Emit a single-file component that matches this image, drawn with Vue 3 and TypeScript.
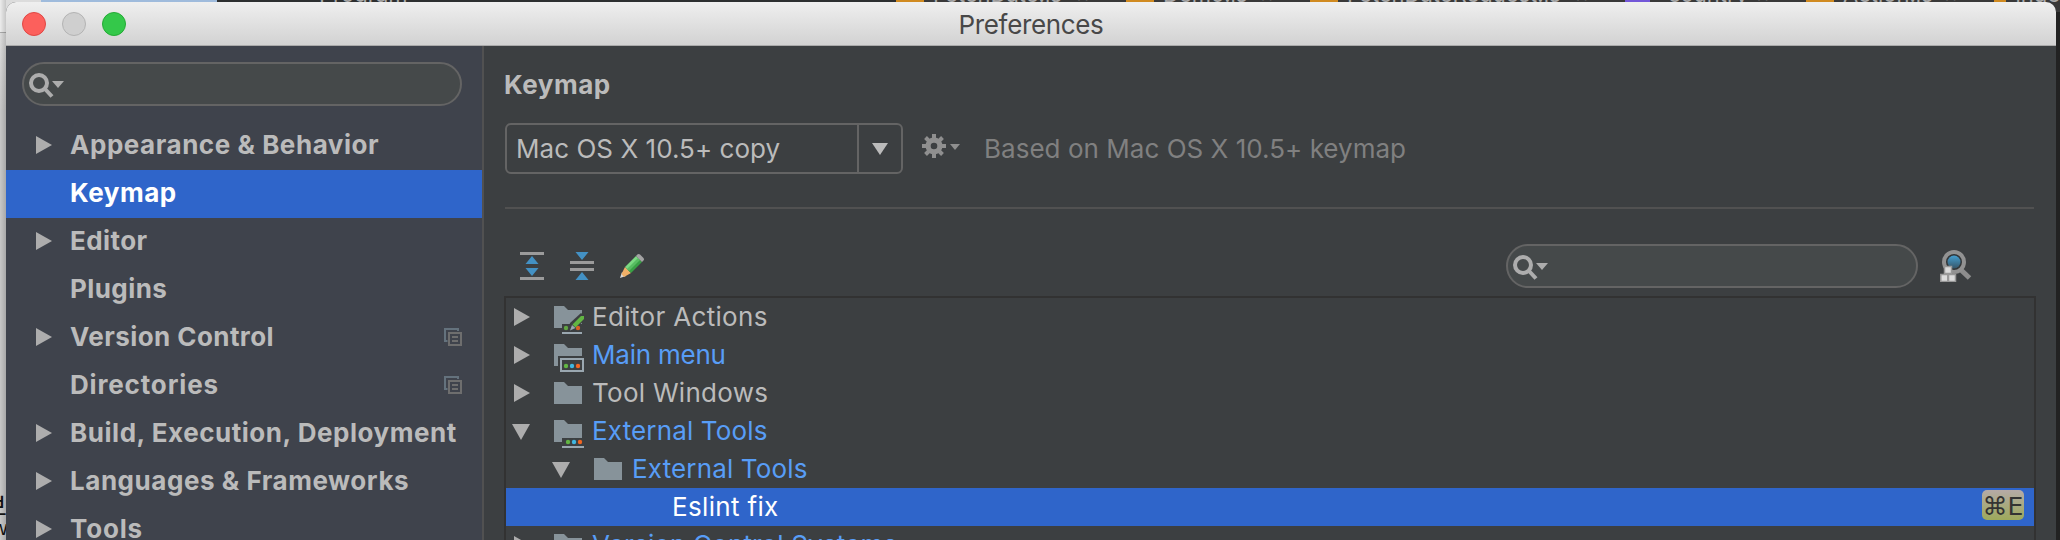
<script setup lang="ts">
interface SideItem { label: string; arrow: boolean; selected?: boolean; copy?: boolean; track: string }
interface TreeItem { label: string; level: number; arrow: 'right' | 'down' | ''; icon: string; link?: boolean; selected?: boolean; track: string }

const side: SideItem[] = [
  { label: 'Appearance & Behavior', arrow: true, track: 's0' },
  { label: 'Keymap', arrow: false, selected: true, track: 's1' },
  { label: 'Editor', arrow: true, track: 's2' },
  { label: 'Plugins', arrow: false, track: 's3' },
  { label: 'Version Control', arrow: true, copy: true, track: 's4' },
  { label: 'Directories', arrow: false, copy: true, track: 's5' },
  { label: 'Build, Execution, Deployment', arrow: true, track: 's6' },
  { label: 'Languages & Frameworks', arrow: true, track: 's7' },
  { label: 'Tools', arrow: true, track: 's8' },
]
const tree: TreeItem[] = [
  { label: 'Editor Actions', level: 0, arrow: 'right', icon: 'edit', track: 't0' },
  { label: 'Main menu', level: 0, arrow: 'right', icon: 'menu', link: true, track: 't1' },
  { label: 'Tool Windows', level: 0, arrow: 'right', icon: 'plain', track: 't2' },
  { label: 'External Tools', level: 0, arrow: 'down', icon: 'tools', link: true, track: 't3' },
  { label: 'External Tools', level: 1, arrow: 'down', icon: 'plain', link: true, track: 't3' },
  { label: 'Eslint fix', level: 2, arrow: '', icon: '', selected: true, track: 't5' },
  { label: 'Version Control Systems', level: 0, arrow: 'right', icon: 'plain', link: true, track: 't6' },
]
// Editor tabs of the window behind, peeking out above the dialog
const tabs = [
  { label: 'FetchDate.js', size: 'w1', icon: 'js' },
  { label: 'Demo.js', size: 'w2', icon: 'js' },
  { label: 'FetchDateRequest.js', size: 'w3', icon: 'js' },
  { label: 'country', size: 'w4', icon: 'purple' },
  { label: 'Action.js', size: 'w5', icon: 'js' },
  { label: 'inde', size: 'w6', icon: 'js' },
]
</script>

<template>
  <div class="desktop">
    <div class="backdrop">
      <div class="strip">
        <i class="pale"></i><i class="sky"></i>
        <div class="project"><span>Program</span></div>
        <div v-for="t in tabs" :key="t.label" class="tab" :class="t.size"><i :class="t.icon"></i><span>{{ t.label }}</span><b v-if="t.size !== 'w6'">×</b></div>
      </div>
      <div class="edge"><span>보</span><span class="second">w</span></div>
    </div>
    <div class="window">
      <header class="titlebar">
        <div class="lights"><i class="red"></i><i class="grey"></i><i class="green"></i></div>
        <span class="title">Preferences</span>
      </header>
      <div class="body">
        <aside class="sidebar">
          <div class="search side-search">
            <svg width="38" height="28" viewBox="0 0 38 28"><circle cx="11" cy="11" r="8" /><path class="stroke" d="M17 17l7 7.500" /><path class="fill" d="M24 9h12l-6 7z" /></svg>
          </div>
          <div v-for="s in side" :key="s.label" class="side-row" :class="{ selected: s.selected }">
            <svg class="arrow" width="18" height="18" viewBox="0 0 18 18"><path v-if="s.arrow" d="M1 0L17 9L1 18z" /></svg>
            <span :class="s.track">{{ s.label }}</span>
            <svg v-if="s.copy" class="copy" width="18" height="18" viewBox="0 0 18 18">
              <path class="back" d="M14 3V1H1V13H3.500" /><path class="front" d="M5 5H17V17H5zM8 9H14M8 13H14" />
            </svg>
          </div>
        </aside>
        <main class="main">
          <h1><span class="h">Keymap</span></h1>
          <div class="scheme">
            <div class="combo">
              <span class="combo-text">Mac OS X 10.5+ copy</span>
              <span class="combo-btn"><svg width="16" height="12"><path d="M0 0h16l-8 12z" /></svg></span>
            </div>
            <svg class="gear" width="40" height="24" viewBox="0 0 40 24">
              <g transform="translate(12 12)">
                <path v-for="a in [0, 45, 90, 135]" :key="a" :transform="`rotate(${a})`" d="M-2-12H2V-5H-2zM-2 5H2V12H-2z" />
                <path fill-rule="evenodd" d="M-8.500 0a8.500 8.500 0 1 0 17 0a8.500 8.500 0 1 0-17 0M-3.300 0a3.300 3.300 0 1 0 6.600 0a3.300 3.300 0 1 0-6.600 0" />
              </g>
              <path d="M28 10h10l-5 6z" />
            </svg>
            <span class="based">Based on Mac OS X 10.5+ keymap</span>
          </div>
          <hr>
          <div class="tools">
            <svg width="24" height="28" viewBox="0 0 24 28"><path class="bar" d="M0 0h24v3H0zM0 25h24v3H0z" /><path class="blue" d="M5.500 12h13L12 4zM5.500 16h13L12 24z" /></svg>
            <svg width="24" height="28" viewBox="0 0 24 28"><path class="bar" d="M0 9h24v3H0zM0 16h24v3H0z" /><path class="blue" d="M5.500 0h13L12 8zM5.500 28h13L12 20z" /></svg>
            <svg width="24" height="28" viewBox="0 0 24 28">
              <path fill="#d8d8d8" d="M0 26L2 20L6 24z" /><path fill="#f0b068" d="M1.500 22L5 15L11 21L4 25z" />
              <path fill="#7bd982" d="M5 15L16 4L19 7L8 18z" /><path fill="#39a045" d="M8 18L19 7L22 10L11 21z" />
              <path fill="#58bd62" d="M7 17L18 6L20 8L9 19z" /><path fill="#a3a3a3" d="M16 4Q18 1 20 2.500L23.500 6Q25 8 22 10z" />
            </svg>
            <div class="search tree-search">
              <svg width="38" height="28" viewBox="0 0 38 28"><circle cx="11" cy="11" r="8" /><path class="stroke" d="M17 17l7 7.500" /><path class="fill" d="M24 9h12l-6 7z" /></svg>
            </div>
            <svg class="find" width="32" height="32" viewBox="0 0 32 32">
              <defs><linearGradient id="lens" x2="0" y2="1"><stop stop-color="#459fd0" /><stop offset="1" stop-color="#365568" /></linearGradient></defs>
              <path d="M20 19L29.500 28" stroke="#8d8d8d" stroke-width="5" /><circle cx="14" cy="12" r="10" fill="#333638" stroke="#929292" stroke-width="4" />
              <circle cx="14" cy="12" r="6.500" fill="url(#lens)" />
              <g fill="#dcdcdc" stroke="#999" stroke-width="1.500"><path d="M4.500 16.500h7v7h-7zM.8 24.500h7v7h-7zM8.500 24.500h7v7h-7z" /></g>
            </svg>
          </div>
          <div class="tree">
            <div v-for="(t, i) in tree" :key="i" class="tree-row" :class="[{ selected: t.selected, link: t.link }, 'level' + t.level]">
              <svg class="arrow" width="20" height="18" viewBox="0 0 20 18">
                <path v-if="t.arrow === 'right'" d="M2 0L18 9L2 18z" /><path v-if="t.arrow === 'down'" d="M0 2H18L9 18z" />
              </svg>
              <svg class="folder" width="30" height="28" viewBox="0 0 30 28">
                <template v-if="t.icon">
                  <path v-if="t.icon === 'plain'" fill="#87939a" d="M0 0H10L14 4H28V22H0z" />
                  <path v-else-if="t.icon === 'menu'" fill="#87939a" d="M0 0H10L14 4H28V12H4V22H0z" />
                  <path v-else fill="#87939a" d="M0 0H10L14 4H28V18H8V22H0z" />
                </template>
                <template v-if="t.icon === 'menu'">
                  <path fill="none" stroke="#9aa7b0" stroke-width="2" d="M7 15H29V27H7z" />
                  <circle cx="12" cy="22" r="2.200" fill="#62b543" /><circle cx="18" cy="22" r="2.200" fill="#40b6e0" /><circle cx="24" cy="22" r="2.200" fill="#f26522" />
                </template>
                <template v-if="t.icon === 'tools'">
                  <path fill="#9aa7b0" d="M8 26H30V28H8z" />
                  <circle cx="14" cy="22" r="2.200" fill="#62b543" /><circle cx="20" cy="22" r="2.200" fill="#40b6e0" /><circle cx="26" cy="22" r="2.200" fill="#f26522" />
                </template>
                <template v-if="t.icon === 'edit'">
                  <path d="M14 25L16 17L27 7L33 12L20 24z" fill="#3c3f41" />
                  <circle cx="12" cy="22" r="2.200" fill="#62a543" /><circle cx="24" cy="22" r="2.200" fill="#d86025" />
                  <path fill="#9aa7b0" d="M8 26H28V28H8zM16 24.500L18 19L21.500 22z" /><path fill="#62b543" d="M18.500 18.500L27 10H30V13L21.500 21.500z" />
                </template>
              </svg>
              <span :class="t.track">{{ t.label }}</span>
              <kbd v-if="t.selected">⌘E</kbd>
            </div>
          </div>
        </main>
      </div>
    </div>
  </div>
</template>

<style>
html, body { margin: 0; overflow: hidden; }
</style>
<style scoped>
* { box-sizing: border-box; }
.desktop { width: 2060px; height: 540px; overflow: hidden; position: relative; background: #222; font: 26px/38px Inter, "Liberation Sans", sans-serif; padding: 2px 4px 0 6px; white-space: nowrap; }
.backdrop { position: absolute; inset: 0; }
.strip { position: absolute; inset: 0 0 auto 0; height: 12px; overflow: hidden; display: flex; background: #2d2f30; font-size: 22px; line-height: 26px; color: #aaa; }
.pale { width: 41px; background: #dcdcdc; }
.sky { width: 176px; background: #9fbbdc; }
.project { width: 679px; padding-left: 102px; }
.strip span, .strip b { display: block; margin-top: -19px; }
.strip b { margin-left: auto; margin-right: 36px; font-weight: 400; color: #666; }
.tab { display: flex; flex: none; background: #393939; }
.tab i { width: 28px; height: 2px; margin-right: 9px; background: #d08a20; }
.tab .purple { width: 25px; margin-right: 18px; background: #7357d8; }
.w1 { width: 230px; } .w2 { width: 184px; } .w3 { width: 315px; } .w4 { width: 181px; } .w5 { width: 188px; } .w6 { width: 66px; }
.edge { position: absolute; left: 0; top: 0; width: 6px; height: 540px; overflow: hidden; background: linear-gradient(90deg, transparent, rgba(0, 0, 0, .16)), linear-gradient(#ececec 0 32px, #aaa 32px 33px, #dedede 33px, #c8c8c8 110px); color: #111; }
.edge span { display: block; margin: 490px 0 0 -17px; font: 26px/30px "Noto Sans CJK KR", sans-serif; }
.edge .second { margin: -3px 0 0 -8px; font-size: 20px; line-height: 20px; }
.window { position: relative; height: 600px; background: #3c3f41; border-radius: 10px 10px 0 0; overflow: hidden; }
.titlebar { height: 44px; position: relative; background: linear-gradient(#efefef, #d2d2d2); border-bottom: 1px solid #aaa; display: flex; align-items: center; justify-content: center; color: #484848; }
.title { letter-spacing: -.35px; padding: 2px 0 0; }
.lights { position: absolute; left: 16px; top: 10px; display: flex; gap: 16px; }
.lights i { width: 24px; height: 24px; border-radius: 50%; border: 1px solid #df4744; background: #fc605c; }
.lights .grey { background: #cfcfcf; border-color: #b3b3b3; }
.lights .green { background: #34c84a; border-color: #24aa35; }
.body { display: flex; height: 556px; }
.sidebar { width: 478px; background: #3f434c; border-right: 2px solid #515151; padding-top: 16px; color: #bbb; font-weight: 700; flex: none; }
.search { height: 44px; border: 2px solid #646464; border-radius: 22px; background: #45494a; display: flex; padding: 8px 0 0 4px; }
.side-search { width: 440px; margin: 0 0 16px 16px; }
.search circle, .search .stroke { fill: none; stroke: #adadad; stroke-width: 4; }
.search .fill { fill: #adadad; }
.side-row { height: 48px; display: flex; align-items: center; padding: 0 20px 2px 29px; }
.side-row .arrow { margin-right: 17px; }
.s0, .s1, .s6, .s7, .h { letter-spacing: .54px; }
.s2, .s3, .s4 { letter-spacing: .43px; }
.s5, .s8 { letter-spacing: .84px; }
.t0, .t5 { letter-spacing: .34px; }
.t1 { letter-spacing: -.22px; }
.t2 { letter-spacing: .28px; }
.t3, .t6 { letter-spacing: .15px; }
.arrow { fill: #adadad; flex: none; }
.copy { margin-left: auto; fill: none; stroke-width: 2; }
.copy .back { stroke: #64727d; } .copy .front { stroke: #6e6e6e; }
.selected { background: #2f65ca; color: #fff; }
.main { flex: 1; padding: 20px 20px 0 20px; color: #bbb; }
h1 { font-size: 26px; line-height: 38px; margin: 0 0 19px; }
.scheme { display: flex; height: 51px; }
.combo { width: 398px; height: 51px; margin-left: 1px; border: 2px solid #646464; border-radius: 6px; display: flex; align-items: center; padding-left: 9px; }
.combo-text { padding-top: 1px; letter-spacing: .04px; }
.combo-btn { margin-left: auto; width: 44px; height: 100%; border-left: 2px solid #646464; display: flex; align-items: center; justify-content: center; fill: #bbb; }
.gear { margin: 11px 0 0 19px; fill: #8f8f8f; }
.based { color: #808080; margin: 7px 0 0 22px; letter-spacing: .03px; }
hr { height: 2px; margin: 33px 2px 0 1px; border: 0; background: #515151; }
.tools { display: flex; height: 87px; padding: 43px 0 0 16px; gap: 26px; }
.tools .bar { fill: #9b9b9b; } .tools .blue { fill: #4391c4; }
.tree-search { width: 412px; margin: -8px 0 0 auto; flex: none; }
.find { margin: -2px 64px 0 -4px; flex: none; }
.tree { border: 2px solid #323232; height: 300px; }
.tree-row { height: 38px; display: flex; align-items: center; padding-left: 6px; }
.level1 { padding-left: 46px; } .level2 { padding-left: 86px; }
.tree-row .folder { margin: 6px 8px 0 22px; flex: none; }
.link { color: #589df6; }
kbd { margin: -4px 10px 0 auto; width: 42px; height: 30px; border-radius: 5px; background: linear-gradient(#b5aaa7, #9da95b); color: #333; font: 25px/34px "DejaVu Sans", sans-serif; display: flex; justify-content: center; }
</style>
